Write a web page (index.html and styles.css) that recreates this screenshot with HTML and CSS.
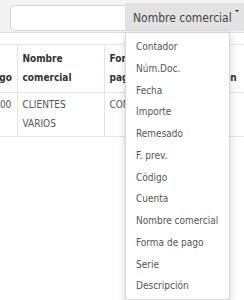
FILE: index.html
```html
<!DOCTYPE html>
<html lang="es">
<head>
    <meta charset="UTF-8">
    <title>Listado</title>
    <link rel="stylesheet" href="styles.css">
</head>
<body>
    <div class="toolbar">
        <input class="search" type="text">
        <div class="dropdown">
            <button class="dropdown-toggle">Nombre comercial<span class="caret"></span></button>
            <ul class="dropdown-menu">
                <li>Contador</li>
                <li>Núm.Doc.</li>
                <li>Fecha</li>
                <li>Importe</li>
                <li>Remesado</li>
                <li>F. prev.</li>
                <li>Código</li>
                <li>Cuenta</li>
                <li>Nombre comercial</li>
                <li>Forma de pago</li>
                <li>Serie</li>
                <li>Descripción</li>
            </ul>
        </div>
    </div>
    <div class="table-wrap">
        <table class="grid">
            <thead>
                <tr>
                    <th class="c-cod">Código</th>
                    <th class="c-nom">Nombre comercial</th>
                    <th class="c-forma">Forma de pago</th>
                    <th class="c-desc">Descripción</th>
                    <th class="c-serie">Serie</th>
                </tr>
            </thead>
            <tbody>
                <tr>
                    <td>430000</td>
                    <td>CLIENTES VARIOS</td>
                    <td>CONTADO</td>
                    <td></td>
                    <td></td>
                </tr>
            </tbody>
        </table>
    </div>
</body>
</html>
```

FILE: styles.css
```css
* {
    box-sizing: border-box;
}

body {
    margin: 0;
    min-height: 300px;
    background: #fff;
    font-family: "DejaVu Sans Condensed", "DejaVu Sans", sans-serif;
    font-stretch: condensed;
    font-size: 10px;
    color: #555;
}

/* barra de búsqueda */
.toolbar {
    display: flex;
    align-items: flex-end;
    height: 33px;
    padding: 0 0 1px 10px;
    background: #f3f3f3;
    border-bottom: 1px solid #dedede;
}

.search {
    flex: 1;
    min-width: 0;
    width: 0;
    height: 26px;
    margin: 0;
    border: 1px solid #d4d4d4;
    border-right: 0;
    border-radius: 5px 0 0 5px;
    background: #fff;
}

.dropdown {
    position: relative;
    flex: 0 0 119px;
}

.dropdown-toggle {
    display: block;
    width: 100%;
    height: 28px;
    margin: 0;
    padding: 0 0 0 8px;
    text-align: left;
    white-space: nowrap;
    border: 0;
    background: #e2e2e2;
    font-family: inherit;
    font-stretch: condensed;
    font-size: 12px;
    color: #444;
}

.caret {
    display: inline-block;
    width: 0;
    height: 0;
    margin-left: 3px;
    vertical-align: 10px;
    border-top: 2px solid #222;
    border-left: 2px solid transparent;
    border-right: 2px solid transparent;
}

.dropdown-menu {
    position: absolute;
    top: calc(100% + 1px);
    left: 0;
    z-index: 10;
    width: 105px;
    margin: 0;
    padding: 3px 0 2px;
    list-style: none;
    background: #fff;
    border: 1px solid #d6d6d6;
    border-radius: 0 0 3px 3px;
    box-shadow: 0 3px 8px rgba(0, 0, 0, 0.18);
}

.dropdown-menu li {
    height: 21.75px;
    line-height: 21.75px;
    padding-left: 10px;
    white-space: nowrap;
    color: #555;
}

/* tabla */
.table-wrap {
    overflow: hidden;
    margin-top: 11px;
    border-top: 1px solid #e6e6e6;
}

.grid {
    table-layout: fixed;
    width: 332px;
    margin-left: -28px;
    border-collapse: collapse;
    line-height: 18.5px;
}

.grid th,
.grid td {
    padding: 3px 5px;
    text-align: left;
    overflow: hidden;
    white-space: normal;
    border-right: 1px solid #e4e4e4;
    border-bottom: 1px solid #e4e4e4;
}

.grid th {
    height: 47px;
    padding-top: 5px;
    padding-bottom: 5px;
    vertical-align: bottom;
    color: #333;
}

.grid td {
    vertical-align: top;
}

.c-cod { width: 45px; }
.c-nom { width: 87px; }
.c-forma { width: 68px; }
.c-desc { width: 72px; }
.c-serie { width: 60px; }
```
